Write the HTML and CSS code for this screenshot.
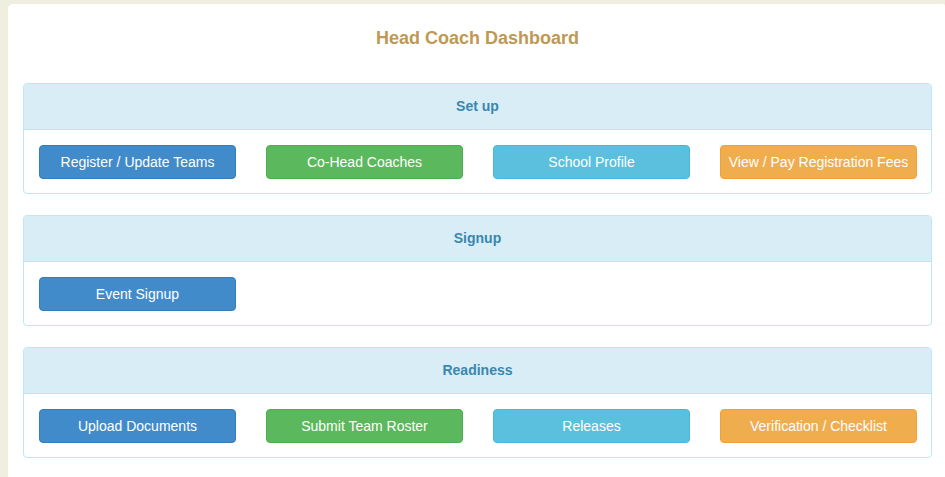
FILE: index.html
```html
<!DOCTYPE html>
<html>
<head>
<meta charset="utf-8">
<link rel="stylesheet" href="styles.css">
</head>
<body>
<div class="page">
  <div class="card">
    <h1 class="title">Head Coach Dashboard</h1>

    <section class="panel">
      <div class="panel-heading">Set up</div>
      <div class="panel-body">
        <a class="btn btn-primary">Register / Update Teams</a>
        <a class="btn btn-success">Co-Head Coaches</a>
        <a class="btn btn-info">School Profile</a>
        <a class="btn btn-warning">View / Pay Registration Fees</a>
      </div>
    </section>

    <section class="panel">
      <div class="panel-heading">Signup</div>
      <div class="panel-body">
        <a class="btn btn-primary">Event Signup</a>
      </div>
    </section>

    <section class="panel panel-last">
      <div class="panel-heading">Readiness</div>
      <div class="panel-body">
        <a class="btn btn-primary">Upload Documents</a>
        <a class="btn btn-success">Submit Team Roster</a>
        <a class="btn btn-info">Releases</a>
        <a class="btn btn-warning">Verification / Checklist</a>
      </div>
    </section>
  </div>
</div>
</body>
</html>
```

FILE: styles.css
```css
html, body {
  margin: 0;
  padding: 0;
  overflow: hidden;
  background: #efefe0;
  font-family: "Liberation Sans", Arial, sans-serif;
}

.page {
  padding: 4px 0 0 8px;
  width: 960px;
}

.card {
  box-sizing: border-box;
  width: 939px;
  height: 473px;
  background: #ffffff;
  border-radius: 5px 5px 0 0;
  padding: 22px 15px 0 15px;
}

.title {
  margin: 0 0 33px 0;
  font-size: 18px;
  line-height: 24px;
  font-weight: bold;
  color: #c09853;
  text-align: center;
}

.panel {
  border: 1px solid #bce8f1;
  border-radius: 4px;
  margin-bottom: 21px;
  background: #fff;
  overflow: hidden;
}

.panel-last {
  margin-bottom: 0;
}

.panel-heading {
  background: #d9edf7;
  border-bottom: 1px solid #bce8f1;
  height: 45px;
  line-height: 45px;
  text-align: center;
  font-size: 14px;
  font-weight: bold;
  color: #3a87ad;
}

.panel-body {
  display: grid;
  grid-template-columns: repeat(4, 197px);
  column-gap: 30px;
  padding: 15px 15px 14px 15px;
}

.btn {
  display: block;
  box-sizing: border-box;
  height: 34px;
  line-height: 20px;
  padding: 6px 4px;
  border: 1px solid transparent;
  border-radius: 4px;
  font-size: 14px;
  color: #ffffff;
  text-align: center;
  white-space: nowrap;
  cursor: pointer;
}

.btn-primary { background: #428bca; border-color: #357ebd; }
.btn-success { background: #5cb85c; border-color: #4cae4c; }
.btn-info { background: #5bc0de; border-color: #46b8da; }
.btn-warning { background: #f0ad4e; border-color: #eea236; }
```
